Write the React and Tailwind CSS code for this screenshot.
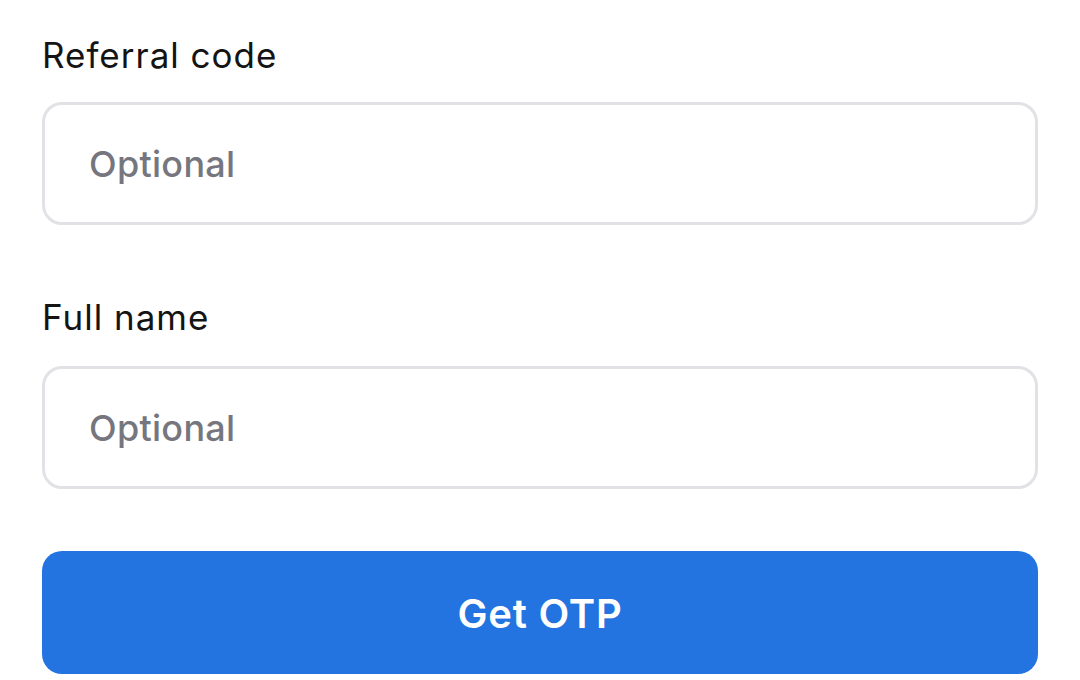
export default function App() {
  return (
    <div className="w-[1080px] h-[680px] bg-white overflow-hidden" style={{ fontFamily: "Inter, 'Noto Sans', sans-serif" }}>
      <div className="px-[42px] pt-[35px] flex flex-col">
        <label className="text-[35px] leading-[40px] tracking-[1px] text-[#141414] font-normal">Referral code</label>
        <div className="mt-[27px] h-[123px] rounded-[20px] border-[3px] border-[#e2e2e6] flex items-center px-[44px]">
          <span className="text-[36px] font-medium tracking-[0.3px] text-[#76767f]">Optional</span>
        </div>
        <label className="mt-[72px] text-[35px] leading-[40px] tracking-[1px] text-[#141414] font-normal">Full name</label>
        <div className="mt-[29px] h-[123px] rounded-[20px] border-[3px] border-[#e2e2e6] flex items-center px-[44px]">
          <span className="text-[36px] font-medium tracking-[0.3px] text-[#76767f]">Optional</span>
        </div>
        <button className="mt-[62px] h-[123px] rounded-[20px] bg-[#2374e0] text-white text-[40px] tracking-[0.8px] font-semibold flex items-center justify-center pt-[3px]">
          Get OTP
        </button>
      </div>
    </div>
  );
}
